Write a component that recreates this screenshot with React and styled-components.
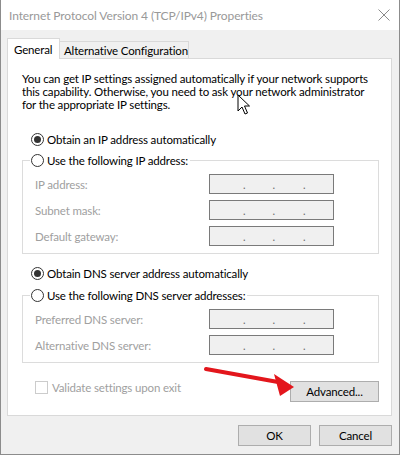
import React from 'react';
import styled, { createGlobalStyle } from 'styled-components';

const GlobalStyle = createGlobalStyle`
	html, body {
		margin: 0;
		padding: 0;
		background: #ffffff;
	}
	body {
		font-family: Lato, 'Liberation Sans', sans-serif;
		font-size: 11.5px;
		letter-spacing: -0.15px;
		color: #000000;
	}
`;

const Window = styled.div`
	position: relative;
	width: 400px;
	height: 455px;
	box-sizing: border-box;
	border: 1px solid #8c8c8c;
	border-top: none;
	display: flex;
	flex-direction: column;
	background: #f0f0f0;
	overflow: hidden;
`;

const TitleBar = styled.div`
	height: 30px;
	flex: none;
	display: flex;
	align-items: center;
	justify-content: space-between;
	padding: 0 9px 0 8px;
	background: #ffffff;
	color: #999999;
	font-size: 12px;
	letter-spacing: -0.1px;
`;

const CloseIcon = styled.svg`
	width: 12px;
	height: 12px;
`;

const Body = styled.div`
	flex: 1;
	padding: 8px 7px 0 6px;
`;

const Tabs = styled.div`
	display: flex;
	align-items: flex-end;
	margin-bottom: -1px;
	position: relative;
	z-index: 1;
`;

const Tab = styled.div`
	box-sizing: border-box;
	border: 1px solid #d9d9d9;
	border-bottom: none;
	display: flex;
	align-items: center;
	white-space: nowrap;
	background: ${(p) => (p.active ? '#ffffff' : '#f0f0f0')};
	height: ${(p) => (p.active ? '21px' : '17px')};
	margin-bottom: ${(p) => (p.active ? '0' : '1px')};
	margin-left: ${(p) => (p.active ? '0' : '-1px')};
	width: ${(p) => p.w}px;
	padding-left: ${(p) => (p.active ? '6px' : '4px')};
	padding-top: ${(p) => (p.active ? '0' : '1px')};
`;

const Panel = styled.div`
	box-sizing: border-box;
	height: 358px;
	border: 1px solid #d9d9d9;
	background: #ffffff;
	padding: 13px 12px 0 14px;
	display: flex;
	flex-direction: column;
`;

const Intro = styled.p`
	margin: 0;
	line-height: 13px;
`;

const RadioRow = styled.label`
	display: flex;
	align-items: center;
	height: 16px;
	gap: 3px;
	white-space: nowrap;
	margin-top: ${(p) => p.mt || 0}px;
	margin-left: ${(p) => (p.legend ? 0 : 9)}px;
`;

const RadioCircle = styled.span`
	box-sizing: border-box;
	width: 13px;
	height: 13px;
	border-radius: 50%;
	border: 1px solid #333333;
	background: #ffffff;
	display: flex;
	align-items: center;
	justify-content: center;
	&::after {
		content: '';
		width: 7px;
		height: 7px;
		border-radius: 50%;
		background: ${(p) => (p.checked ? '#333333' : 'transparent')};
	}
`;

const Group = styled.fieldset`
	margin: ${(p) => p.mt}px 0 0;
	padding: 0 0 7px 7px;
	border: 1px solid #dcdcdc;
	min-width: 0;
`;

const Legend = styled.legend`
	padding: 0 2px 0 1px;
`;

const Fields = styled.div`
	display: flex;
	flex-direction: column;
	gap: 6px;
	margin-top: 6px;
	padding-left: 5px;
`;

const FieldRow = styled.div`
	display: flex;
	align-items: center;
	height: 20px;
	color: #a0a0a0;
`;

const FieldLabel = styled.span`
	width: 174px;
`;

const IpBox = styled.div`
	box-sizing: border-box;
	width: 125px;
	height: 20px;
	border: 1px solid #7a7a7a;
	background: #f0f0f0;
	display: flex;
	align-items: flex-end;
	padding-bottom: 3px;
	color: #6d6d6d;
	font-size: 11px;
	line-height: 10px;
`;

const Octet = styled.span`
	width: ${(p) => p.w}px;
`;

const BottomRow = styled.div`
	display: flex;
	justify-content: space-between;
	align-items: flex-start;
	margin-top: 18px;
`;

const CheckRow = styled.label`
	display: flex;
	align-items: center;
	gap: 4px;
	margin-left: 13px;
	color: #a0a0a0;
	height: 13px;
`;

const CheckBox = styled.span`
	box-sizing: border-box;
	width: 13px;
	height: 13px;
	border: 1px solid #cccccc;
	background: #ffffff;
`;

const Button = styled.button`
	box-sizing: border-box;
	width: ${(p) => p.w}px;
	height: 21px;
	border: 1px solid #adadad;
	background: #e1e1e1;
	font: inherit;
	letter-spacing: inherit;
	color: #000000;
	padding: 0;
`;

const Footer = styled.div`
	display: flex;
	justify-content: flex-end;
	gap: 8px;
	margin-top: 9px;
`;

const Overlay = styled.svg`
	position: absolute;
	left: ${(p) => p.x}px;
	top: ${(p) => p.y}px;
	pointer-events: none;
`;

const IpField = () => (
	<IpBox>
		<Octet w={33} />.<Octet w={27} />.<Octet w={28} />.
	</IpBox>
);

const Radio = ({ checked, label, mt, legend }) => (
	<RadioRow mt={mt} legend={legend}>
		<RadioCircle checked={checked} />
		{label}
	</RadioRow>
);

const App = () => {
	return (
		<>
			<GlobalStyle />
			<Window>
				<TitleBar>
					<span>Internet Protocol Version 4 (TCP/IPv4) Properties</span>
					<CloseIcon viewBox="0 0 12 12">
						<path d="M0.5 0.5 L11.5 11.5 M11.5 0.5 L0.5 11.5" stroke="#8a8a8a" strokeWidth="1" fill="none" />
					</CloseIcon>
				</TitleBar>
				<Body>
					<Tabs>
						<Tab active w={53}>General</Tab>
						<Tab w={130}>Alternative Configuration</Tab>
					</Tabs>
					<Panel>
						<Intro>
							You can get IP settings assigned automatically if your network supports
							this capability. Otherwise, you need to ask your network administrator
							for the appropriate IP settings.
						</Intro>
						<Radio checked label="Obtain an IP address automatically" mt={20} />
						<Group mt={5}>
							<Legend>
								<Radio legend label="Use the following IP address:" />
							</Legend>
							<Fields>
								<FieldRow>
									<FieldLabel>IP address:</FieldLabel>
									<IpField />
								</FieldRow>
								<FieldRow>
									<FieldLabel>Subnet mask:</FieldLabel>
									<IpField />
								</FieldRow>
								<FieldRow>
									<FieldLabel>Default gateway:</FieldLabel>
									<IpField />
								</FieldRow>
							</Fields>
						</Group>
						<Radio checked label="Obtain DNS server address automatically" mt={11} />
						<Group mt={6}>
							<Legend>
								<Radio legend label="Use the following DNS server addresses:" />
							</Legend>
							<Fields>
								<FieldRow>
									<FieldLabel>Preferred DNS server:</FieldLabel>
									<IpField />
								</FieldRow>
								<FieldRow>
									<FieldLabel>Alternative DNS server:</FieldLabel>
									<IpField />
								</FieldRow>
							</Fields>
						</Group>
						<BottomRow>
							<CheckRow>
								<CheckBox />
								Validate settings upon exit
							</CheckRow>
							<Button w={89}>Advanced...</Button>
						</BottomRow>
					</Panel>
					<Footer>
						<Button w={73}>OK</Button>
						<Button w={73}>Cancel</Button>
					</Footer>
				</Body>
				<Overlay x={203} y={364} width={94} height={34} viewBox="0 0 94 34">
					<path d="M2 5 L74 18" stroke="#e3161c" strokeWidth="4" strokeLinecap="round" />
					<path d="M70 10 L90 23 L76 32 Z" fill="#e3161c" />
				</Overlay>
				<Overlay x={236} y={94} width={14} height={22} viewBox="0 0 14 22">
					<path d="M1 1 L1 17 L5 13 L8 20 L10.5 19 L7.5 12 L12.5 12 Z" fill="#ffffff" stroke="#000000" strokeWidth="1" strokeLinejoin="round" />
				</Overlay>
			</Window>
		</>
	);
};

export default App;
